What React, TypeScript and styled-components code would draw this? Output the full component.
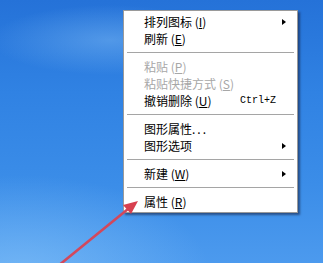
import React from "react";
import styled, { createGlobalStyle } from "styled-components";

const Global = createGlobalStyle`
  html, body { margin: 0; padding: 0; }
  body { width: 323px; height: 263px; overflow: hidden; }
`;

const Desktop = styled.div`
  position: relative;
  width: 323px;
  height: 263px;
  box-sizing: border-box;
  padding: 10px 0 0 123px;
  overflow: hidden;
  background:
    radial-gradient(ellipse 190px 100px at 20px 275px, rgba(140, 200, 250, 0.6), rgba(140, 200, 250, 0) 100%),
    radial-gradient(ellipse 120px 35px at 110px 40px, rgba(130, 190, 245, 0.45), rgba(130, 190, 245, 0) 100%),
    linear-gradient(to bottom, #2572d8 0%, #3082e3 35%, #3b8de8 70%, #4c9aee 100%);
  font-family: "Noto Sans CJK SC", "Noto Sans", sans-serif;
`;

const Menu = styled.div`
  width: 175px;
  height: 203px;
  box-sizing: border-box;
  background: #ffffff;
  border: 1px solid #9a9a9a;
  padding: 2px 3px;
  box-shadow: 2px 2px 2px rgba(20, 30, 60, 0.55);
  display: flex;
  flex-direction: column;
`;

const Item = styled.div<{ $disabled?: boolean }>`
  height: 17px;
  display: flex;
  align-items: center;
  padding-left: 17px;
  padding-right: 6px;
  font-size: 12px;
  line-height: 17px;
  color: ${(p) => (p.$disabled ? "#a7a7a7" : "#000000")};
  white-space: nowrap;
`;

const Label = styled.span`
  flex: 1;
`;

const Dots = styled.span`
  letter-spacing: 2px;
`;

const Key = styled.span`
  font-family: "Liberation Mono", "DejaVu Sans Mono", monospace;
  font-size: 10px;
  margin-right: 12px;
`;

const Arrow = styled.span`
  width: 0;
  height: 0;
  border-top: 3.5px solid transparent;
  border-bottom: 3.5px solid transparent;
  border-left: 4px solid #000;
  margin-right: 2px;
`;

const Separator = styled.div`
  height: 11px;
  display: flex;
  align-items: center;
  &::after {
    content: "";
    display: block;
    width: 100%;
    height: 1px;
    background: #a5a5a5;
  }
`;

const Overlay = styled.svg`
  position: absolute;
  left: 0;
  top: 0;
  pointer-events: none;
`;

type Entry =
  | { sep: true }
  | { label: string; key: string; disabled?: boolean; sub?: boolean; accel?: string; dots?: boolean };

const entries: Entry[] = [
  { label: "排列图标", key: "I", sub: true },
  { label: "刷新", key: "E" },
  { sep: true },
  { label: "粘贴", key: "P", disabled: true },
  { label: "粘贴快捷方式", key: "S", disabled: true },
  { label: "撤销删除", key: "U", accel: "Ctrl+Z" },
  { sep: true },
  { label: "图形属性", key: "", dots: true },
  { label: "图形选项", key: "", sub: true },
  { sep: true },
  { label: "新建", key: "W", sub: true },
  { sep: true },
  { label: "属性", key: "R" },
];

export default function App() {
  return (
    <>
      <Global />
      <Desktop>
        <Menu>
          {entries.map((e, i) =>
            "sep" in e ? (
              <Separator key={i} />
            ) : (
              <Item key={i} $disabled={e.disabled}>
                <Label>
                  {e.label}
                  {e.dots && <Dots>...</Dots>}
                  {e.key && (
                    <>
                      {" "}(<u>{e.key}</u>)
                    </>
                  )}
                </Label>
                {e.accel && <Key>{e.accel}</Key>}
                {e.sub && <Arrow />}
              </Item>
            )
          )}
        </Menu>
        <Overlay width="323" height="263" viewBox="0 0 323 263">
          <line x1="58" y1="266" x2="128" y2="209" stroke="#d2485c" strokeWidth="2.6" strokeLinecap="round" />
          <polygon points="138,201 123,205 131,214" fill="#d8404f" />
        </Overlay>
      </Desktop>
    </>
  );
}
